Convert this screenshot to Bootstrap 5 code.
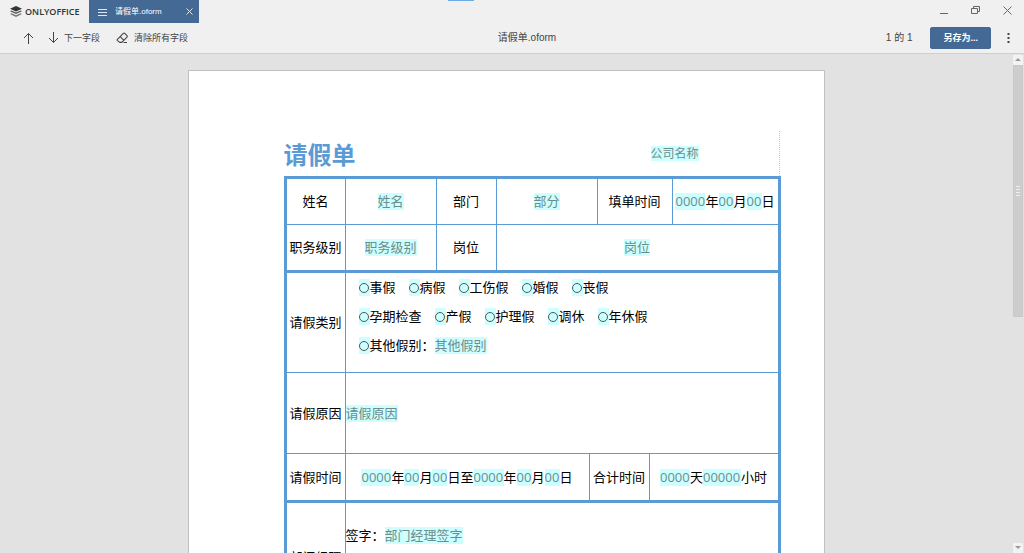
<!DOCTYPE html>
<html lang="zh-CN">
<head>
<meta charset="utf-8">
<meta name="viewport" content="width=device-width, initial-scale=1">
<title>请假单.oform - ONLYOFFICE</title>
<link href="https://cdn.jsdelivr.net/npm/bootstrap@5.3.0/dist/css/bootstrap.min.css" rel="stylesheet">
<style>
  :root { --brand: #446995; --rule: #5b9bd5; --field: #ccffff; --chrome: #f0f0f0; }
  body { font-family: "Liberation Sans", "Noto Sans CJK SC", sans-serif; background: #e2e2e2; color: #444; }
  svg { display: block; fill: none; stroke: #444; }
  .plain { border: 0; background: none; padding: 0; color: inherit; }

  .titlebar { background: var(--chrome); height: 23px; }
  .brand { width: 89px; padding-left: 10px; }
  .brand-name { font: 600 9px/12px "Open Sans", sans-serif; color: #333; }
  .loading { left: 448px; width: 26px; height: 1px; background: #6cabe4; }
  .doc-tab { background: var(--brand); color: #fff; width: 110px; font-size: 8px; line-height: 12px; padding: 0 6px 0 9px; }
  .doc-tab svg { stroke: #dfe8f2; }
  .window-buttons { gap: 23px; padding: 0 12px 2px 0; }
  .window-buttons svg { stroke: #666; }

  .toolbar { background: var(--chrome); height: 31px; border-bottom: 1px solid #cfcfcf; padding: 0 10px 0 22px; font-size: 9px; line-height: 14px; }
  .side { flex: 1 1 0; }
  .file-title, .page-count { font-size: 10px; }
  .file-title { margin-left: 18px; }
  .page-count { margin-right: 18px; }
  .save-btn { --bs-btn-color: #fff; --bs-btn-bg: var(--brand); --bs-btn-border-color: var(--brand); --bs-btn-hover-color: #fff; --bs-btn-hover-bg: #375478;
    --bs-btn-font-size: 9px; --bs-btn-font-weight: 700; --bs-btn-line-height: 12px; --bs-btn-padding-x: 12px; --bs-btn-padding-y: 4px; --bs-btn-border-radius: 2px; }

  .sheet { width: 100%; max-width: 637px; margin-top: 16px; padding: 60px 43px 60px 95px; background: #fff; border: 1px solid #c0c0c0; }
  .sheet-head { height: 45px; border-right: 1px dotted #c4c8d0; margin-right: 1px; padding-right: 80px; }
  .sheet-head h1 { font-size: 24px; line-height: 30px; font-weight: 700; color: var(--rule); padding-top: 4px; }

  .leave-form { table-layout: fixed; width: 100%; border-collapse: collapse; border: 3px solid var(--rule); color: #000; font-size: 13px; line-height: 17px; }
  .leave-form th, .leave-form td { border: 1px solid var(--rule); padding: 0; font-weight: 400; text-align: center; vertical-align: middle; white-space: nowrap; }
  .leave-form .section > * { border-bottom: 3px solid var(--rule); }
  .leave-form .start { text-align: left; }
  .row-base { height: 47px; } .row-types { height: 101px; } .row-reason { height: 81px; } .row-time { height: 48px; } .row-sign { height: 112px; }
  .w60 { width: 60px; } .w91 { width: 91px; } .w93 { width: 93px; } .w8 { width: 8px; } .w52 { width: 52px; } .w23 { width: 23px; } .w107 { width: 107px; }

  .fill { border: 0; border-radius: 0; padding: 0; margin: 0; background: var(--field); font-family: "Open Sans", "Noto Sans CJK SC", sans-serif; font-weight: 400; font-size: 13px; line-height: 17px; height: 17px; vertical-align: top; color: #333; }
  .fill::placeholder { color: #6f8c8c; opacity: 1; }
  .fill-sm { font-size: 12px; height: 15px; width: 48px; line-height: 15px; }
  .cjk2 { width: 26px; } .cjk4 { width: 52px; } .cjk6 { width: 78px; }
  .num2 { width: 15px; } .num4 { width: 30px; } .num5 { width: 38px; }
  .nums { font-size: 0; }
  .nums span, .nums label { font-size: 13px; vertical-align: top; }

  .types { gap: 12px; padding: 6px 13px; }
  .choices { gap: 13px; }
  .choices label { display: flex; align-items: center; }
  .choices input[type=radio] { appearance: none; width: 11px; height: 17px; margin: 0; background: var(--field); display: grid; place-items: center; }
  .choices input[type=radio]::before { content: ""; width: 10px; height: 10px; border: 1px solid #555; border-radius: 50%; }
  .choices input[type=radio]:checked::before { background: #555; }
  .sign { padding-top: 24px; }

  .scroll-rail { width: 12px; padding: 1px 1px 0; }
  .scroll-end { height: 10px; background: #f3f3f3; }
  .scroll-end svg { fill: #999; stroke: none; }
  .scroll-thumb { flex: 0 1 252px; background: #cdcdcd; border: 1px solid #c8c8c8; }
  .scroll-thumb svg { stroke: #efefef; }
</style>
</head>
<body class="vh-100 d-flex flex-column overflow-hidden">
<header class="titlebar d-flex align-items-stretch position-relative flex-shrink-0">
  <div class="brand d-flex align-items-center flex-shrink-0">
    <svg class="flex-shrink-0" width="12" height="13" viewBox="0 0 13 13" aria-hidden="true"><g stroke="none"><path fill="#333" d="M6.500.5 13 3.500 6.500 6.500 0 3.500z"/><path fill="#555" d="M1.500 5.300 6.500 7.600l5-2.300L13 6.200 6.500 9.300 0 6.200z"/><path fill="#777" d="M1.500 8.300 6.500 10.600l5-2.300 1.500.9-6.500 3.200L0 9.200z"/></g></svg>
    <span class="brand-name" style="margin-left:3px">ONLYOFFICE</span>
  </div>
  <div class="doc-tab d-flex align-items-center">
    <svg width="9" height="8" viewBox="0 0 9 8" aria-hidden="true"><path d="M0 1.500h9M0 4.500h9M0 7.500h9"/></svg>
    <span class="ms-2 flex-fill text-nowrap">请假单.oform</span>
    <button class="plain" aria-label="关闭标签"><svg width="7" height="7" viewBox="0 0 7 7"><path d="m.5.5 6 6m0-6-6 6"/></svg></button>
  </div>
  <div class="loading position-absolute top-0"></div>
  <div class="window-buttons d-flex align-items-center ms-auto">
    <button class="plain" aria-label="最小化"><svg width="9" height="9" viewBox="0 0 9 9"><path d="M1 7.500h8"/></svg></button>
    <button class="plain" aria-label="还原"><svg width="9" height="9" viewBox="0 0 9 9"><path d="M.5 2.500h6v5h-6zM2.500 2V.5h6v5h-2"/></svg></button>
    <button class="plain" aria-label="关闭"><svg width="9" height="9" viewBox="0 0 9 9"><path d="m.5.5 8 8m0-8-8 8"/></svg></button>
  </div>
</header>

<nav class="toolbar d-flex align-items-center flex-shrink-0" aria-label="表单工具">
  <div class="side d-flex align-items-center text-nowrap">
    <button class="plain" aria-label="上一字段"><svg width="13" height="12" viewBox="0 0 13 12"><path d="M6.500 12V1.500M2 6l4.500-4.500L11 6"/></svg></button>
    <button class="plain d-flex align-items-center ms-2 ps-1"><svg class="me-1" width="13" height="12" viewBox="0 0 13 12"><path d="M6.500 0v10.500M2 6l4.500 4.500L11 6"/></svg>下一字段</button>
    <button class="plain d-flex align-items-center ms-3"><svg class="me-1" width="14" height="12" viewBox="0 0 14 12"><path d="M1.400 7.300 7.300 1.400q.7-.7 1.400 0l2.300 2.300q.7.7 0 1.400L5.700 10.400H4L1.400 8.600q-.6-.6 0-1.300zM4.200 4.700l3.700 3.700M7.500 10.500H11" stroke-width="1.100"/></svg>清除所有字段</button>
  </div>
  <span class="file-title">请假单.oform</span>
  <div class="side d-flex align-items-center justify-content-end">
    <span class="page-count">1 的 1</span>
    <button class="btn save-btn">另存为...</button>
    <button class="plain ms-3 me-1" aria-label="更多"><svg width="3" height="10" viewBox="0 0 3 10"><path fill="#444" stroke="none" d="M.5 0h2v2h-2zM.5 4h2v2h-2zM.5 8h2v2h-2z"/></svg></button>
  </div>
</nav>

<div class="d-flex flex-fill overflow-hidden">
  <main class="flex-fill overflow-hidden">
    <form class="sheet mx-auto">
      <div class="sheet-head d-flex align-items-center justify-content-between">
        <h1 class="m-0">请假单</h1>
        <input class="fill fill-sm" placeholder="公司名称" aria-label="公司名称">
      </div>
      <table class="leave-form">
        <colgroup><col class="w60"><col class="w91"><col class="w60"><col class="w93"><col class="w8"><col class="w52"><col class="w23"><col class="w107"></colgroup>
        <tbody>
        <tr class="row-base">
          <th><label for="name">姓名</label></th>
          <td><input id="name" class="fill cjk2" placeholder="姓名"></td>
          <th><label for="dept">部门</label></th>
          <td colspan="2"><input id="dept" class="fill cjk2" placeholder="部分"></td>
          <th colspan="2"><label for="fy">填单时间</label></th>
          <td class="nums"><input id="fy" class="fill num4" placeholder="0000"><span>年</span><input class="fill num2" placeholder="00" aria-label="月"><span>月</span><input class="fill num2" placeholder="00" aria-label="日"><span>日</span></td>
        </tr>
        <tr class="row-base section">
          <th><label for="grade">职务级别</label></th>
          <td><input id="grade" class="fill cjk4" placeholder="职务级别"></td>
          <th><label for="post">岗位</label></th>
          <td colspan="5"><input id="post" class="fill cjk2" placeholder="岗位"></td>
        </tr>
        <tr class="row-types">
          <th>请假类别</th>
          <td colspan="7" class="start align-top">
            <div class="types d-flex flex-column">
              <div class="choices d-flex">
                <label><input type="radio" name="kind">事假</label>
                <label><input type="radio" name="kind">病假</label>
                <label><input type="radio" name="kind">工伤假</label>
                <label><input type="radio" name="kind">婚假</label>
                <label><input type="radio" name="kind">丧假</label>
              </div>
              <div class="choices d-flex">
                <label><input type="radio" name="kind">孕期检查</label>
                <label><input type="radio" name="kind">产假</label>
                <label><input type="radio" name="kind">护理假</label>
                <label><input type="radio" name="kind">调休</label>
                <label><input type="radio" name="kind">年休假</label>
              </div>
              <div class="choices d-flex gap-0">
                <label><input type="radio" name="kind">其他假别：</label>
                <input class="fill cjk4" placeholder="其他假别" aria-label="其他假别">
              </div>
            </div>
          </td>
        </tr>
        <tr class="row-reason">
          <th><label for="reason">请假原因</label></th>
          <td colspan="7" class="start"><input id="reason" class="fill cjk4" placeholder="请假原因"></td>
        </tr>
        <tr class="row-time section">
          <th><label for="sy">请假时间</label></th>
          <td colspan="3" class="nums"><input id="sy" class="fill num4" placeholder="0000"><span>年</span><input class="fill num2" placeholder="00" aria-label="开始月"><span>月</span><input class="fill num2" placeholder="00" aria-label="开始日"><span>日至</span><input class="fill num4" placeholder="0000" aria-label="结束年"><span>年</span><input class="fill num2" placeholder="00" aria-label="结束月"><span>月</span><input class="fill num2" placeholder="00" aria-label="结束日"><span>日</span></td>
          <th colspan="2"><label for="days">合计时间</label></th>
          <td colspan="2" class="nums"><input id="days" class="fill num4" placeholder="0000"><span>天</span><input class="fill num5" placeholder="00000" aria-label="小时"><span>小时</span></td>
        </tr>
        <tr class="row-sign">
          <th>部门经理</th>
          <td colspan="7" class="start align-top"><div class="sign nums"><label for="sign">签字：</label><input id="sign" class="fill cjk6" placeholder="部门经理签字"></div></td>
        </tr>
        </tbody>
      </table>
    </form>
  </main>
  <div class="scroll-rail d-flex flex-column flex-shrink-0" aria-hidden="true">
    <div class="scroll-end d-grid"><svg class="m-auto" width="6" height="4" viewBox="0 0 6 4"><path d="M3 0 6 3H0z"/></svg></div>
    <div class="scroll-thumb d-grid"><svg class="m-auto" width="4" height="10" viewBox="0 0 4 10"><path d="M0 .5h4M0 3.500h4M0 6.500h4M0 9.500h4"/></svg></div>
    <div class="scroll-end d-grid mt-auto"><svg class="m-auto" width="6" height="4" viewBox="0 0 6 4"><path d="M0 0h6L3 3z"/></svg></div>
  </div>
</div>
<script src="https://cdn.jsdelivr.net/npm/bootstrap@5.3.0/dist/js/bootstrap.bundle.min.js"></script>
</body>
</html>
